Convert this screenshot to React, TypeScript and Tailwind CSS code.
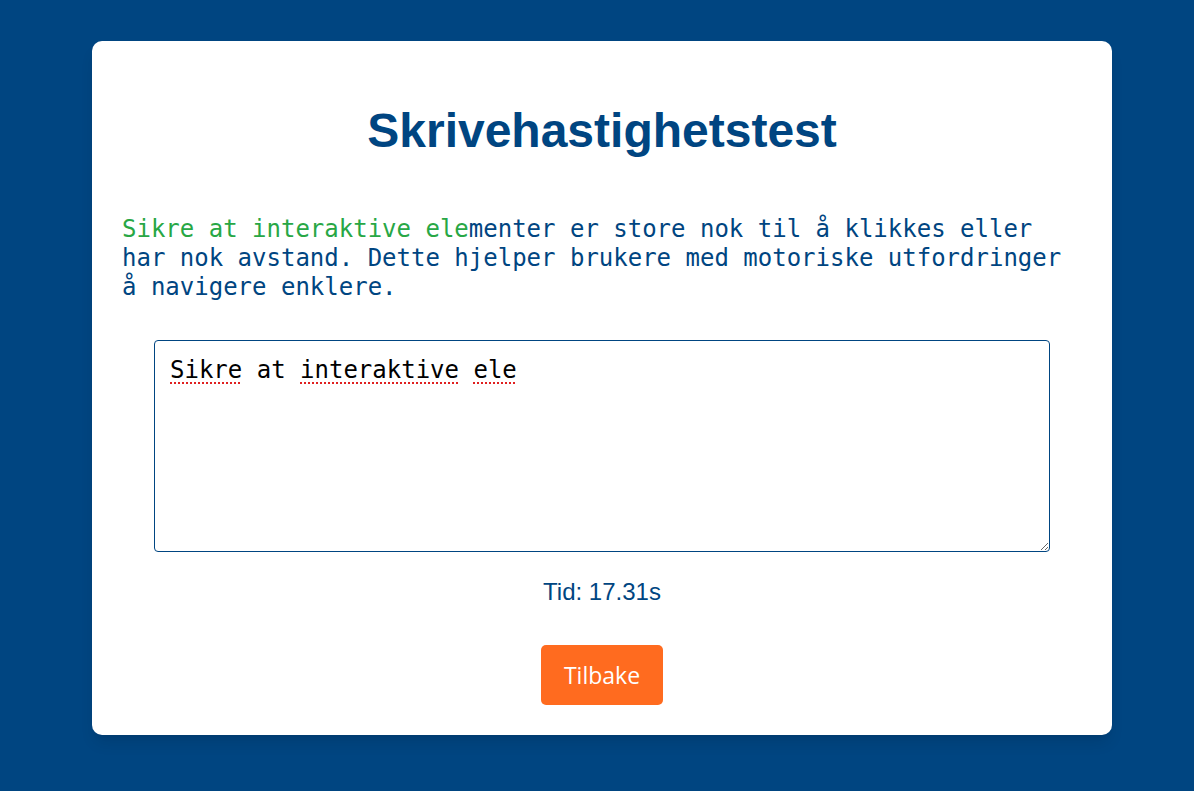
export default function App() {
  const target = 'Sikre at interaktive elementer er store nok til å klikkes eller har nok avstand. Dette hjelper brukere med motoriske utfordringer å navigere enklere.';
  const typed = 'Sikre at interaktive ele';
  const flagged = ['Sikre', 'interaktive', 'ele'];

  return (
    <div className="min-h-[791px] bg-[#004581] pt-[41px]">
      <div className="ml-[92px] w-[1020px] rounded-[10px] bg-white px-[30px] pt-[58px] pb-[30px] shadow-lg">
        <h1 className="text-center font-['Liberation_Sans',Arial,sans-serif] text-[48px] font-bold leading-[64px] text-[#004581]">
          Skrivehastighetstest
        </h1>
        <p className="mt-[52px] font-['DejaVu_Sans_Mono',monospace] text-[24px] leading-[29px] text-[#004581]">
          <span className="text-[#28a745]">{typed}</span>
          {target.slice(typed.length)}
        </p>
        <div className="relative mx-auto mt-[38px] h-[212px] w-[896px]">
          {/* spellcheck squiggles */}
          <div className="pointer-events-none absolute inset-0 border border-transparent px-[15px] pt-[15px] font-['DejaVu_Sans_Mono',monospace] text-[24px] leading-[29px] whitespace-pre text-transparent">
            {typed.split(' ').map((w, i) => (
              <span key={i}>
                {i > 0 ? ' ' : ''}
                <span className={flagged.includes(w) ? 'underline decoration-[#e02020] decoration-dotted decoration-2 underline-offset-[4px]' : ''}>{w}</span>
              </span>
            ))}
          </div>
          <textarea
            defaultValue={typed}
            spellCheck={false}
            className="relative block h-full w-full resize-y rounded-[4px] border border-[#004581] bg-transparent px-[15px] pt-[15px] pb-[10px] font-['DejaVu_Sans_Mono',monospace] text-[24px] leading-[29px] text-black outline-none"
          />
        </div>
        <div className="mt-[24px] text-center font-['Liberation_Sans',Arial,sans-serif] text-[24px] leading-[32px] text-[#004581]">
          Tid: 17.31s
        </div>
        <div className="mt-[37px] flex justify-center">
          <button className="h-[60px] w-[122px] rounded-[5px] bg-[#ff6b1f] font-['Open_Sans',sans-serif] text-[23px] text-white">
            Tilbake
          </button>
        </div>
      </div>
    </div>
  );
}
